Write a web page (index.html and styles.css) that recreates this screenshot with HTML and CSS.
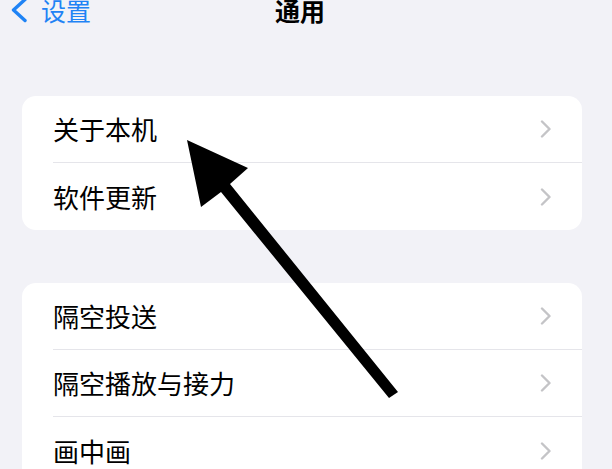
FILE: index.html
```html
<!DOCTYPE html>
<html lang="zh">
<head>
<meta charset="utf-8">
<link rel="stylesheet" href="styles.css">
</head>
<body>
<div class="screen">
  <div class="nav">
    <div class="back">
      <svg class="back-icon" width="18" height="26" viewBox="0 0 18 26"><path d="M15 2.5 L3.5 13 L15 23.5" fill="none" stroke="#1f83f5" stroke-width="3.4" stroke-linecap="round" stroke-linejoin="round"/></svg>
      <span class="back-text">设置</span>
    </div>
    <div class="title">通用</div>
  </div>

  <div class="group first">
    <div class="row"><span class="label">关于本机</span><svg class="chev" width="12" height="18" viewBox="0 0 12 18"><path d="M2 1.5 L9.5 9 L2 16.5" fill="none" stroke="#c4c4c7" stroke-width="2.4" stroke-linecap="round" stroke-linejoin="round"/></svg></div>
    <div class="row"><span class="label">软件更新</span><svg class="chev" width="12" height="18" viewBox="0 0 12 18"><path d="M2 1.5 L9.5 9 L2 16.5" fill="none" stroke="#c4c4c7" stroke-width="2.4" stroke-linecap="round" stroke-linejoin="round"/></svg></div>
  </div>

  <div class="group">
    <div class="row"><span class="label">隔空投送</span><svg class="chev" width="12" height="18" viewBox="0 0 12 18"><path d="M2 1.5 L9.5 9 L2 16.5" fill="none" stroke="#c4c4c7" stroke-width="2.4" stroke-linecap="round" stroke-linejoin="round"/></svg></div>
    <div class="row"><span class="label">隔空播放与接力</span><svg class="chev" width="12" height="18" viewBox="0 0 12 18"><path d="M2 1.5 L9.5 9 L2 16.5" fill="none" stroke="#c4c4c7" stroke-width="2.4" stroke-linecap="round" stroke-linejoin="round"/></svg></div>
    <div class="row"><span class="label">画中画</span><svg class="chev" width="12" height="18" viewBox="0 0 12 18"><path d="M2 1.5 L9.5 9 L2 16.5" fill="none" stroke="#c4c4c7" stroke-width="2.4" stroke-linecap="round" stroke-linejoin="round"/></svg></div>
  </div>

  <svg class="arrow" width="612" height="469" viewBox="0 0 612 469"><polygon points="187,140 201,207 221,192 389,398 398,392 230,184 248,168" fill="#000"/></svg>
</div>
</body>
</html>
```

FILE: styles.css
```css
html, body {
  margin: 0;
  padding: 0;
  background: #f2f2f7;
}
.screen {
  position: relative;
  width: 612px;
  height: 469px;
  overflow: hidden;
  font-family: "Noto Sans CJK SC", "Noto Sans", sans-serif;
}
.nav {
  position: relative;
  height: 24px;
  margin-top: -2px;
  display: flex;
  align-items: center;
}
.back {
  display: flex;
  align-items: center;
  padding-left: 10px;
  gap: 13px;
}
.back-icon {
  display: block;
}
.back-text {
  color: #1f83f5;
  font-size: 25px;
  line-height: 24px;
}
.title {
  position: absolute;
  left: 0;
  right: 0;
  top: 0;
  padding-right: 12px;
  text-align: center;
  font-size: 25px;
  line-height: 24px;
  font-weight: 700;
  color: #000;
}
.group {
  margin-left: 22px;
  width: 560px;
  background: #fff;
  border-radius: 14px;
  margin-top: 53px;
  overflow: hidden;
}
.group.first {
  margin-top: 74px;
}
.row {
  height: 67px;
  margin-left: 31px;
  padding-right: 30px;
  display: flex;
  align-items: center;
  justify-content: space-between;
  border-bottom: 1.5px solid #e5e5ea;
  box-sizing: border-box;
}
.row:last-child {
  border-bottom: none;
}
.label {
  font-size: 26px;
  line-height: 30px;
  color: #000;
}
.chev {
  display: block;
}
.arrow {
  position: absolute;
  left: 0;
  top: 0;
}
```
